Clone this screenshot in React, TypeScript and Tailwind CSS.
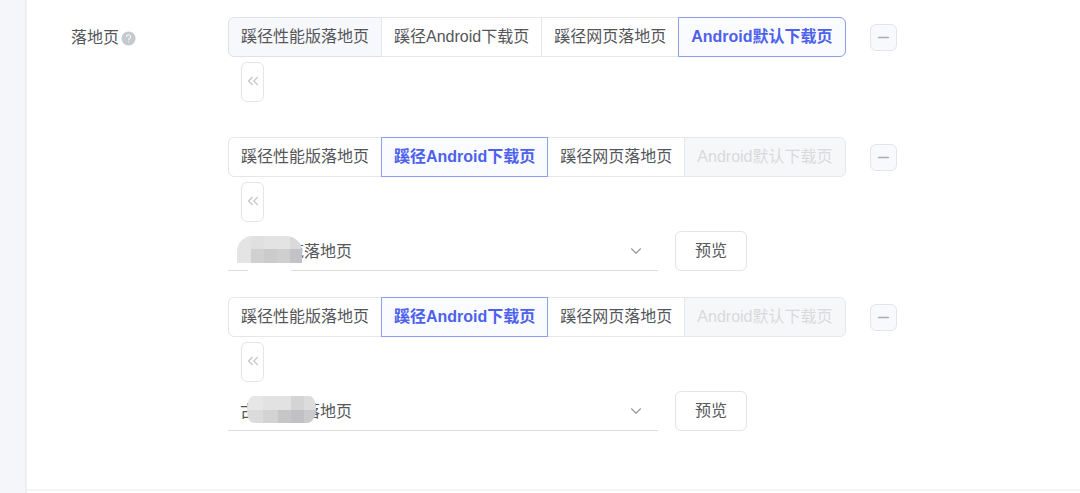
import { Fragment } from "react";
import { ChevronDown, ChevronsLeft, Minus } from "lucide-react";
import clsx from "clsx";

type TabItem = { label: string; hovered?: boolean; active?: boolean; disabled?: boolean };
type Cell = { x: number; y: number; w: number; h: number; fill: string };
type MaskShape = { id: string; outline: string; cells: Cell[]; gap?: Cell };
type Group = { tabs: TabItem[]; page?: string; mask?: MaskShape };

const groups: Group[] = [
  {
    tabs: [
      { label: "蹊径性能版落地页", hovered: true },
      { label: "蹊径Android下载页" },
      { label: "蹊径网页落地页" },
      { label: "Android默认下载页", active: true },
    ],
  },
  {
    tabs: [
      { label: "蹊径性能版落地页" },
      { label: "蹊径Android下载页", active: true },
      { label: "蹊径网页落地页" },
      { label: "Android默认下载页", disabled: true },
    ],
    page: "古\u3000\u3000范落地页",
    mask: {
      id: "mask-a",
      outline: "M9 32V21C9 12 15 5 25 5H58C67 5 74 12 74 20V32Z",
      cells: [
        { x: 9, y: 5, w: 14, h: 27, fill: "#e4e4e5" },
        { x: 23, y: 5, w: 13, h: 13, fill: "#e0e0e0" },
        { x: 36, y: 5, w: 26, h: 13, fill: "#e3e3e3" },
        { x: 62, y: 5, w: 12, h: 13, fill: "#dadada" },
        { x: 23, y: 18, w: 13, h: 14, fill: "#d0d0d0" },
        { x: 36, y: 18, w: 13, h: 14, fill: "#cccbcc" },
        { x: 49, y: 18, w: 13, h: 14, fill: "#cfcfd0" },
        { x: 62, y: 18, w: 12, h: 14, fill: "#c3c3c7" },
      ],
      gap: { x: 20, y: 36, w: 43, h: 4, fill: "#fff" },
    },
  },
  {
    tabs: [
      { label: "蹊径性能版落地页" },
      { label: "蹊径Android下载页", active: true },
      { label: "蹊径网页落地页" },
      { label: "Android默认下载页", disabled: true },
    ],
    page: "古\u3000\u3000\u3000落地页",
    mask: {
      id: "mask-b",
      outline: "M26 5H81C86 5 88 12 88 18C88 26 84 32 79 32H27C21 32 19 26 19 19C19 12 21 5 26 5Z",
      cells: [
        { x: 19, y: 5, w: 16, h: 14, fill: "#e6e6e6" },
        { x: 35, y: 5, w: 28, h: 14, fill: "#e2e2e2" },
        { x: 63, y: 5, w: 13, h: 14, fill: "#d4d4d5" },
        { x: 76, y: 5, w: 12, h: 14, fill: "#dcdcdc" },
        { x: 19, y: 19, w: 16, h: 13, fill: "#dbdbdc" },
        { x: 35, y: 19, w: 15, h: 13, fill: "#d3d3d4" },
        { x: 50, y: 19, w: 13, h: 13, fill: "#c6c6c9" },
        { x: 63, y: 19, w: 13, h: 13, fill: "#c1c1c5" },
        { x: 76, y: 19, w: 12, h: 13, fill: "#cacacc" },
      ],
    },
  },
];

function Mask({ shape }: { shape: MaskShape }) {
  return (
    <svg className="pointer-events-none absolute left-0 top-0" width="96" height="40" viewBox="0 0 96 40" aria-hidden="true">
      <clipPath id={shape.id}>
        <path d={shape.outline} />
      </clipPath>
      <g clipPath={`url(#${shape.id})`} shapeRendering="crispEdges">
        {shape.cells.map((c, i) => (
          <rect key={i} x={c.x} y={c.y} width={c.w} height={c.h} fill={c.fill} />
        ))}
      </g>
      {shape.gap && (
        <rect x={shape.gap.x} y={shape.gap.y} width={shape.gap.w} height={shape.gap.h} fill={shape.gap.fill} />
      )}
    </svg>
  );
}

function TabGroup({ tabs }: { tabs: TabItem[] }) {
  return (
    <div className="flex pl-px" role="group" aria-label="落地页">
      {tabs.map((tab) => (
        <button
          key={tab.label}
          type="button"
          disabled={tab.disabled}
          aria-pressed={!!tab.active}
          className={clsx(
            "-ml-px h-10 whitespace-nowrap border px-3 first:rounded-l-md last:rounded-r-md",
            tab.active && "z-10 border-[#8f9ff0] bg-[#fafbff] font-bold text-[#4d61ee]",
            tab.disabled && "border-[#e6e7ea] bg-[#f6f7f9] text-[#d9dadd]",
            tab.hovered && "border-[#dfe1e8] bg-[#f7f8fc]",
            !tab.active && !tab.disabled && !tab.hovered && "border-[#e4e6ea] bg-white",
          )}
        >
          {tab.label}
        </button>
      ))}
    </div>
  );
}

function LandingGroup({ group }: { group: Group }) {
  return (
    <div>
      <div className="flex items-center gap-6">
        <TabGroup tabs={group.tabs} />
        <button
          type="button"
          aria-label="删除"
          className="flex size-[27px] items-center justify-center rounded-md border border-[#e3e5ec] bg-[#f8f9fc] text-[#a9acb5]"
        >
          <Minus size={17} strokeWidth={2} />
        </button>
      </div>

      <button
        type="button"
        aria-label="收起"
        className="ml-[13px] mt-[5px] flex h-10 w-[23px] items-center justify-center rounded-md border border-[#e4e5e8] pb-0.5 text-[#c3c4c8]"
      >
        <ChevronsLeft size={18} strokeWidth={1.5} className="shrink-0" />
      </button>

      <div className="mt-[9px] flex gap-[17px]">
        {group.page && (
          <Fragment>
            <div className="relative w-[430px]">
              <select
                aria-label="选择落地页"
                className="block h-10 w-full appearance-none border-b border-[#dcdde0] bg-transparent pl-3 pr-10 pt-0.5"
              >
                <option>{group.page}</option>
              </select>
              {group.mask && <Mask shape={group.mask} />}
              <ChevronDown
                size={18}
                strokeWidth={1.5}
                className="pointer-events-none absolute right-[13px] top-[11px] text-[#96989d]"
              />
            </div>
            <button type="button" className="h-10 w-[72px] rounded-md border border-[#e2e4e8] bg-white">
              预览
            </button>
          </Fragment>
        )}
      </div>
    </div>
  );
}

export default function App() {
  return (
    <div className="flex min-h-screen bg-white font-['Liberation_Sans','Noto_Sans_CJK_SC',sans-serif] text-base text-[#55565a]">
      <aside className="w-[27px] shrink-0 border-r-2 border-[#eeeff3] bg-[#f4f6f9]" />
      <main className="min-w-0 flex-1">
        <section className="flex border-b-2 border-[#f4f5f7] pb-[58px] pl-11 pt-[17px]">
          <div className="flex h-10 w-[157px] shrink-0 items-center gap-0.5 pt-0.5">
            <span>落地页</span>
            <svg width="15" height="15" viewBox="0 0 15 15" fill="none" role="img" aria-label="帮助">
              <circle cx="7.5" cy="7.5" r="7" fill="#c5c8ce" />
              <path
                d="M5.4 6A2.1 2.1 0 1 1 8.4 7.8C7.7 8.2 7.5 8.4 7.5 9.2M7.5 10.5V11.5"
                stroke="#f4f5f7"
                strokeWidth="1.1"
              />
            </svg>
          </div>
          <div className="flex flex-col gap-[26px]">
            {groups.map((group, i) => (
              <LandingGroup key={i} group={group} />
            ))}
          </div>
        </section>
      </main>
    </div>
  );
}
